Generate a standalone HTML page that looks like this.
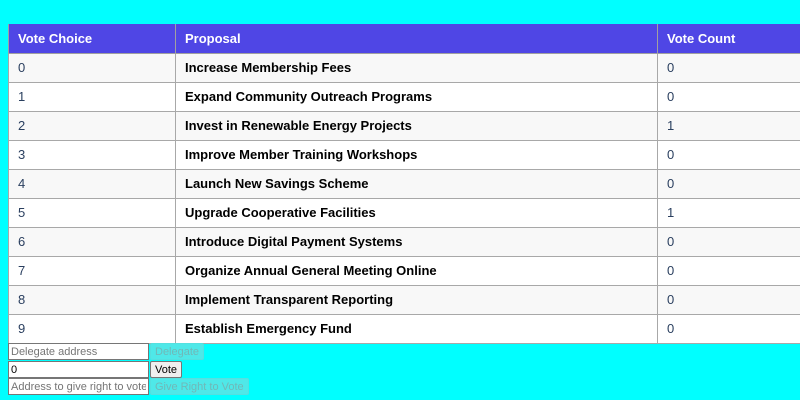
<!DOCTYPE html>
<html><head><style>
body{margin:0;background:#00ffff;font-family:"Liberation Sans",Arial,sans-serif;width:800px;height:400px;overflow:hidden;}
table{position:absolute;left:8px;top:24px;border-collapse:collapse;width:820px;font-size:13px;}
th{background:#4f46e5;color:#fff;text-align:left;font-weight:bold;height:29px;padding:0 9px;border:1px solid #a0a0a0;border-top:none;box-sizing:border-box;}
td{height:29px;padding:0 9px;border:1px solid #a8a8a8;box-sizing:border-box;color:#1a1a2e;}
tr:nth-child(even) td{background:#f8f8f8;}
tr:nth-child(odd) td{background:#fff;}
td.p{font-weight:bold;color:#000;}
td.n{color:#2a3f5f;}
.c1{width:167px}.c2{width:482px}
.f{position:absolute;left:8px;font-size:11px;}
input{width:141px;height:17px;box-sizing:border-box;border:1px solid #767676;padding:0 2px;font:11px "Liberation Sans",Arial,sans-serif;background:#fff;vertical-align:top;margin:0;}
input::placeholder{color:#757575;}
button{height:17px;box-sizing:border-box;font:11px "Liberation Sans",Arial,sans-serif;padding:0 4px;vertical-align:top;margin:0 0 0 1px;border:1px solid #767676;border-radius:2px;background:#efefef;color:#000;}
button.d{background:#4fe8e8;border-color:#55e0e0;color:#70b8b8;}
</style></head><body>
<table>
<tr><th class="c1">Vote Choice</th><th class="c2">Proposal</th><th>Vote Count</th></tr>
<tr><td class="n">0</td><td class="p">Increase Membership Fees</td><td class="n">0</td></tr>
<tr><td class="n">1</td><td class="p">Expand Community Outreach Programs</td><td class="n">0</td></tr>
<tr><td class="n">2</td><td class="p">Invest in Renewable Energy Projects</td><td class="n">1</td></tr>
<tr><td class="n">3</td><td class="p">Improve Member Training Workshops</td><td class="n">0</td></tr>
<tr><td class="n">4</td><td class="p">Launch New Savings Scheme</td><td class="n">0</td></tr>
<tr><td class="n">5</td><td class="p">Upgrade Cooperative Facilities</td><td class="n">1</td></tr>
<tr><td class="n">6</td><td class="p">Introduce Digital Payment Systems</td><td class="n">0</td></tr>
<tr><td class="n">7</td><td class="p">Organize Annual General Meeting Online</td><td class="n">0</td></tr>
<tr><td class="n">8</td><td class="p">Implement Transparent Reporting</td><td class="n">0</td></tr>
<tr><td class="n">9</td><td class="p">Establish Emergency Fund</td><td class="n">0</td></tr>
</table>
<div class="f" style="top:343px"><input placeholder="Delegate address"><button class="d">Delegate</button></div>
<div class="f" style="top:361px"><input value="0"><button>Vote</button></div>
<div class="f" style="top:378px"><input placeholder="Address to give right to vote"><button class="d">Give Right to Vote</button></div>
</body></html>
